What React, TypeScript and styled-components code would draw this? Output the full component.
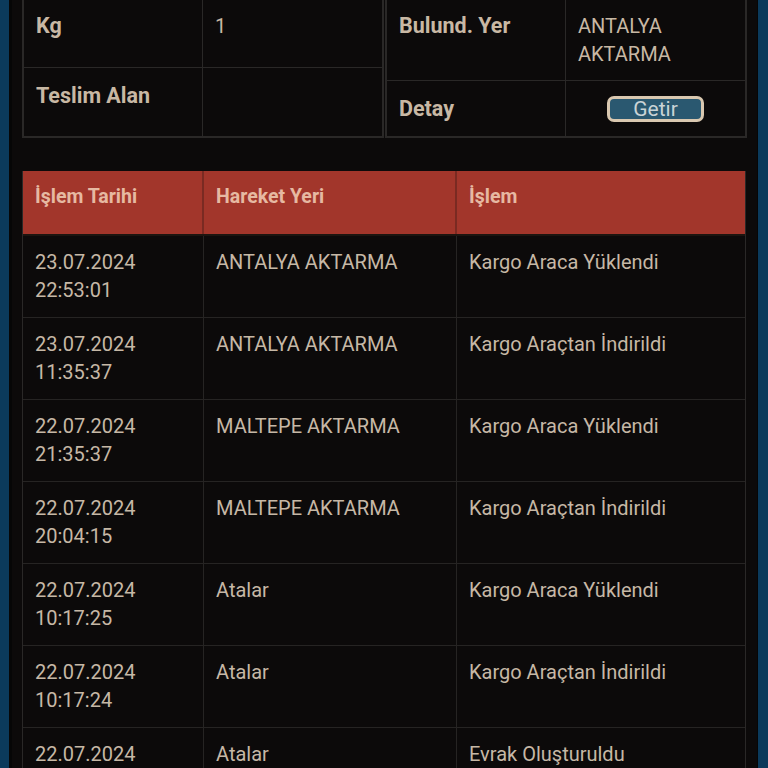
import React from "react";
import styled, { createGlobalStyle } from "styled-components";

const Global = createGlobalStyle`
  html, body { margin: 0; padding: 0; background: #0b3a5b; }
  body { font-family: Roboto, "Noto Sans", sans-serif; }
  * { box-sizing: border-box; }
`;

const Panel = styled.div`
  margin: 0 10px 0 9px;
  min-height: 768px;
  background: #0c0a0a;
  padding: 0 11px 0 10px;
  border-left: 3px solid #060606;
  border-right: 1px solid #060606;
`;

const InfoGrid = styled.div`
  display: grid;
  grid-template-columns: 362px 362px;
  gap: 1px;
  margin-top: -1px;
`;

const InfoTable = styled.div<{ $rows: string }>`
  display: grid;
  grid-template-columns: 1fr 1fr;
  grid-template-rows: ${(p) => p.$rows};
  border: 2px solid #2a2827;
  border-top-width: 1px;
`;

const Cell = styled.div<{ $bold?: boolean; $noRight?: boolean; $noBottom?: boolean; $center?: boolean; $top?: number }>`
  padding: ${(p) => p.$top ?? 12}px 12px 0 12px;
  color: #c8b8a4;
  font-size: ${(p) => (p.$bold ? "21.5px" : "20px")};
  font-weight: ${(p) => (p.$bold ? 700 : 400)};
  line-height: 28px;
  border-right: ${(p) => (p.$noRight ? "none" : "1px solid #2a2827")};
  border-bottom: ${(p) => (p.$noBottom ? "none" : "1px solid #2a2827")};
  display: flex;
  align-items: flex-start;
  justify-content: ${(p) => (p.$center ? "center" : "flex-start")};
  ${(p) => (p.$center ? "padding: 0; align-items: center;" : "")}
`;

const GetirButton = styled.button`
  width: 97px;
  height: 26px;
  border: 3px solid #d9c8b0;
  border-radius: 7px;
  background: #2a5870;
  color: #c9d3d6;
  font-family: Roboto, sans-serif;
  font-size: 21px;
  line-height: 20px;
  padding: 0;
  display: flex;
  align-items: center;
  justify-content: center;
  margin-top: 1px;
`;

const History = styled.div`
  margin-top: 33px;
  border: 1px solid #2a2827;
  border-top: none;
`;

const Row = styled.div`
  display: grid;
  grid-template-columns: 181px 253px 1fr;
`;

const HeadRow = styled(Row)`
  background: #a2362b;
  height: 65px;
  border-bottom: 2px solid #1c1510;
`;

const HeadCell = styled.div<{ $last?: boolean }>`
  padding: 12px 12px 0 12px;
  color: #e6b9a2;
  font-size: 19.5px;
  font-weight: 700;
  line-height: 28px;
  border-right: ${(p) => (p.$last ? "none" : "2px solid #7a2a22")};
`;

const BodyRow = styled(Row)`
  height: 82px;
  border-bottom: 1px solid #262423;
`;

const BodyCell = styled.div<{ $last?: boolean }>`
  padding: 12px 12px 0 12px;
  color: #c6b8a6;
  font-size: 20px;
  font-weight: 400;
  line-height: 28px;
  border-right: ${(p) => (p.$last ? "none" : "1px solid #262423")};
`;

const rows = [
  ["23.07.2024", "22:53:01", "ANTALYA AKTARMA", "Kargo Araca Yüklendi"],
  ["23.07.2024", "11:35:37", "ANTALYA AKTARMA", "Kargo Araçtan İndirildi"],
  ["22.07.2024", "21:35:37", "MALTEPE AKTARMA", "Kargo Araca Yüklendi"],
  ["22.07.2024", "20:04:15", "MALTEPE AKTARMA", "Kargo Araçtan İndirildi"],
  ["22.07.2024", "10:17:25", "Atalar", "Kargo Araca Yüklendi"],
  ["22.07.2024", "10:17:24", "Atalar", "Kargo Araçtan İndirildi"],
  ["22.07.2024", "10:17:20", "Atalar", "Evrak Oluşturuldu"],
];

export default function App() {
  return (
    <>
      <Global />
      <Panel>
        <InfoGrid>
          <InfoTable $rows="68px 68px">
            <Cell $bold>Kg</Cell>
            <Cell $noRight>1</Cell>
            <Cell $bold $noBottom $top={14}>Teslim Alan</Cell>
            <Cell $noRight $noBottom></Cell>
          </InfoTable>
          <InfoTable $rows="81px 55px">
            <Cell $bold>Bulund. Yer</Cell>
            <Cell $noRight>
              ANTALYA
              <br />
              AKTARMA
            </Cell>
            <Cell $bold $noBottom $top={14}>Detay</Cell>
            <Cell $noRight $noBottom $center>
              <GetirButton>Getir</GetirButton>
            </Cell>
          </InfoTable>
        </InfoGrid>
        <History>
          <HeadRow>
            <HeadCell>İşlem Tarihi</HeadCell>
            <HeadCell>Hareket Yeri</HeadCell>
            <HeadCell $last>İşlem</HeadCell>
          </HeadRow>
          {rows.map((r, i) => (
            <BodyRow key={i}>
              <BodyCell>
                {r[0]}
                <br />
                {r[1]}
              </BodyCell>
              <BodyCell>{r[2]}</BodyCell>
              <BodyCell $last>{r[3]}</BodyCell>
            </BodyRow>
          ))}
        </History>
      </Panel>
    </>
  );
}
